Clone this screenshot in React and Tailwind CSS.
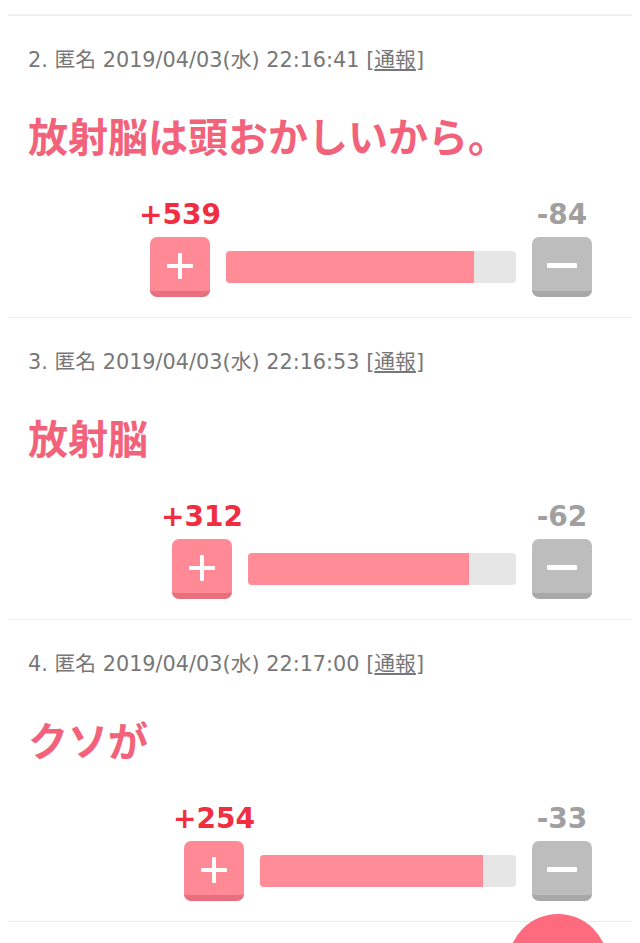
import React from 'react'

const comments = [
  { no: 2, date: '2019/04/03(水) 22:16:41', body: '放射脳は頭おかしいから。', up: 539, down: 84, bar: 290, fill: 248 },
  { no: 3, date: '2019/04/03(水) 22:16:53', body: '放射脳', up: 312, down: 62, bar: 268, fill: 221 },
  { no: 4, date: '2019/04/03(水) 22:17:00', body: 'クソが', up: 254, down: 33, bar: 256, fill: 223 },
]

function PlusIcon() {
  return (
    <svg width="28" height="28" viewBox="0 0 28 28">
      <rect x="12" y="1" width="4" height="26" rx="1" fill="#fff" />
      <rect x="1" y="12" width="26" height="4" rx="1" fill="#fff" />
    </svg>
  )
}

function MinusIcon() {
  return (
    <svg width="30" height="6" viewBox="0 0 30 6">
      <rect x="0" y="0" width="30" height="5" rx="1" fill="#fff" />
    </svg>
  )
}

function Comment({ c }) {
  return (
    <div className="border-b border-[#ececec] pt-[32px] pb-[20px] pl-[20px] pr-[40px]">
      <p className="text-[20.8px] leading-[24px] text-[#777] font-['DejaVu_Sans','Noto_Sans_CJK_JP',sans-serif]">
        {c.no}. 匿名 {c.date} [<span className="underline">通報</span>]
      </p>
      <h2 className="mt-[39px] text-[40px] leading-[48px] font-bold text-[#f2627a] font-['Noto_Sans_CJK_JP',sans-serif]">
        {c.body}
      </h2>
      <div className="mt-[42px] flex items-end justify-end gap-[16px]">
        <div className="flex w-[60px] flex-col items-center">
          <span className="whitespace-nowrap text-[28px] leading-[28px] font-bold text-[#f02d41] font-['DejaVu_Sans',sans-serif]">
            +{c.up}
          </span>
          <button className="mt-[8px] flex h-[60px] w-[60px] items-center justify-center rounded-[7px] border-b-[6px] border-[#e8707e] bg-[#ff8a96] pt-[4px]">
            <PlusIcon />
          </button>
        </div>
        <div className="mb-[14px] h-[32px] rounded-[4px] bg-[#e6e6e6]" style={{ width: c.bar }}>
          <div className="h-full rounded-l-[4px] bg-[#ff8c97]" style={{ width: c.fill }} />
        </div>
        <div className="flex w-[60px] flex-col items-center">
          <span className="whitespace-nowrap text-[28px] leading-[28px] font-bold text-[#a0a0a0] font-['DejaVu_Sans',sans-serif]">
            -{c.down}
          </span>
          <button className="mt-[8px] flex h-[60px] w-[60px] items-center justify-center rounded-[7px] border-b-[6px] border-[#a8a8a8] bg-[#bdbdbd] pt-[4px]">
            <MinusIcon />
          </button>
        </div>
      </div>
    </div>
  )
}

export default function App() {
  return (
    <div className="relative h-[943px] overflow-hidden bg-white">
      <div className="mx-[8px] mt-[14px] border-t-2 border-[#efefef]">
        {comments.map((c) => (
          <Comment key={c.no} c={c} />
        ))}
      </div>
      <div className="absolute left-[508px] top-[914px] h-[100px] w-[100px] rounded-full bg-[#ff6b7e]" />
    </div>
  )
}
